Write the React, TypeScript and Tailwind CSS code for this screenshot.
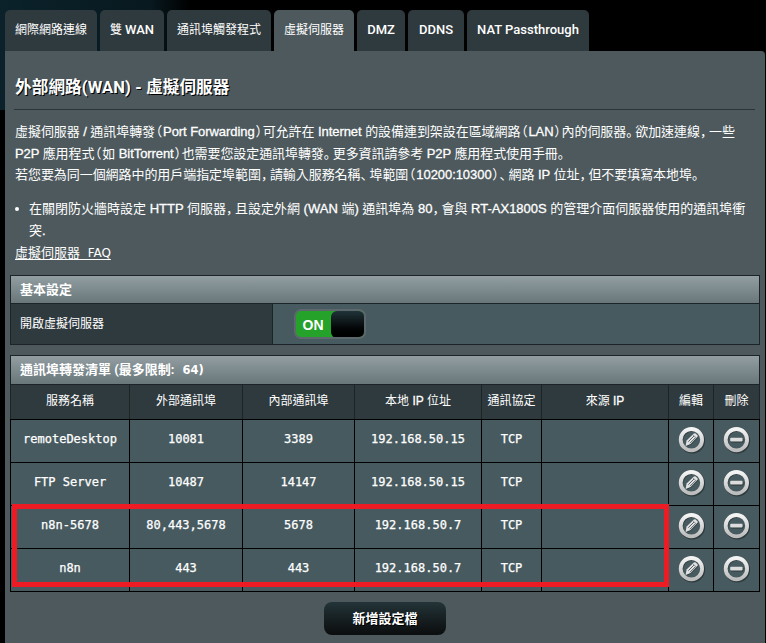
import React from "react";

const latin = "font-['Roboto','Noto_Sans_CJK_TC',sans-serif]";

const tabs = [
  { label: "網際網路連線", size: "w-[92px]" },
  { label: "雙 WAN", size: "w-[64px]" },
  { label: "通訊埠觸發程式", size: "w-[104px]" },
  { label: "虛擬伺服器", size: "w-[80px]", active: true },
  { label: "DMZ", size: "w-[48px]" },
  { label: "DDNS", size: "w-[56px]" },
  { label: "NAT Passthrough", size: "w-[122px]" },
];

const columns = ["服務名稱", "外部通訊埠", "內部通訊埠", "本地 IP 位址", "通訊協定", "來源 IP", "編輯", "刪除"];

const rows = [
  ["remoteDesktop", "10081", "3389", "192.168.50.15", "TCP", ""],
  ["FTP Server", "10487", "14147", "192.168.50.15", "TCP", ""],
  ["n8n-5678", "80,443,5678", "5678", "192.168.50.7", "TCP", ""],
  ["n8n", "443", "443", "192.168.50.7", "TCP", ""],
];

const grid = "grid grid-cols-[119px_113px_112px_127px_60px_127px_45px_46px]";

/* Runs of Chinese and Latin, with full-width punctuation set narrow. */
function Mixed({ text }: { text: string }) {
  return (
    <>
      {text.split(/([（），。、]|[\x20-\x7e]+)/).map((part, i) => {
        if (!part) return null;
        if (/^[（）]$/.test(part))
          return (
            <span key={i} className="inline-block w-[8px] text-center [font-feature-settings:'halt']">
              {part}
            </span>
          );
        if (/^[，。、]$/.test(part))
          return (
            <span key={i} className="inline-block w-[9px] text-left font-['Noto_Sans_CJK_JP',sans-serif] leading-none [font-feature-settings:'halt']">
              {part}
            </span>
          );
        if (/^[\x20-\x7e]+$/.test(part))
          return (
            <span key={i} className="font-['Liberation_Sans',sans-serif] [-webkit-text-stroke:0.3px_white]">
              {part}
            </span>
          );
        return <span key={i}>{part}</span>;
      })}
    </>
  );
}

function Ring({ children, id }: { children: React.ReactNode; id: string }) {
  return (
    <svg width="28" height="28" viewBox="0 0 28 28" className="block">
      <defs>
        <linearGradient id={id} x1="0" y1="0" x2="0" y2="1">
          <stop offset="0" stopColor="#f4f4f4" />
          <stop offset="1" stopColor="#bcbcbc" />
        </linearGradient>
      </defs>
      <circle cx="14.3" cy="14.7" r="11" fill="none" stroke="#1c2527" strokeOpacity="0.6" strokeWidth="3.6" />
      <circle cx="13.4" cy="13.7" r="10.7" fill="none" stroke={`url(#${id})`} strokeWidth="3.8" />
      {children}
    </svg>
  );
}

function EditIcon({ id }: { id: string }) {
  return (
    <Ring id={id}>
      <path d="M8.8 20.5 10 15.7 17.2 8.9Q18 8.3 18.7 9L20 10.4Q20.6 11.1 20 11.8L13 18.7Z" fill="#263033" fillOpacity="0.7" />
      <path d="M7.6 19.9 8.6 14.6 15.9 7.6Q16.8 6.8 17.7 7.6L19.4 9.3Q20.2 10.2 19.4 11.1L12.6 18.1Z" fill="#e2e2e2" />
      <path d="m10.3 15.7 5.7-5.7M12 17.2l5.5-5.5" stroke="#59656a" strokeWidth="1" />
      <path d="m15 8.8 3.3 3.3" stroke="#6c787b" strokeWidth="0.8" />
    </Ring>
  );
}

function DeleteIcon({ id }: { id: string }) {
  return (
    <Ring id={id}>
      <rect x="7.8" y="12.7" width="12.6" height="3.8" rx="1" fill="#2c3739" />
      <rect x="7.2" y="11.8" width="12.4" height="3.8" rx="1" fill="#dcdcdc" />
    </Ring>
  );
}

export default function App() {
  return (
    <div className={`${latin} h-[643px] w-[766px] overflow-hidden bg-black bg-[linear-gradient(90deg,#0b222a_0,#08191f_150px,#000_190px)] bg-[length:766px_110px] bg-no-repeat pl-[5px] pt-[10px] text-white`}>
      <nav className="flex h-[41px] gap-[3px]">
        {tabs.map((t) => (
          <div key={t.label} className={`${t.size} ${t.active ? "bg-[#4d595d]" : "bg-[#2f3a3e]"} flex shrink-0 items-center justify-center whitespace-pre rounded-t-[5px] pb-px text-[12px]`}>
            {t.label.split(/([A-Za-z][A-Za-z ]*)/).map((p, i) => (
              <span key={i} className={/[A-Z]/.test(p) ? "text-[13px] font-medium" : ""}>{p}</span>
            ))}
          </div>
        ))}
      </nav>

      <main className="flex h-[592px] w-[760px] flex-col rounded-tr-sm bg-[#4d595d] pl-[5px]">
        <h1 className="ml-[5px] mt-[25px] h-[24px] whitespace-pre text-[16.6px] font-bold leading-[24px] tracking-[0.1px] [text-shadow:1px_1px_0_#000]">外部網路(WAN) - 虛擬伺服器</h1>
        <div className="ml-[4px] mt-[9px] h-px w-[741px] shrink-0 bg-[#2b3538]" />

        <div className="ml-[5px] mt-[11px] whitespace-pre text-[13px] leading-[21.7px]">
          <p className="tracking-[-0.06px]"><Mixed text="虛擬伺服器 / 通訊埠轉發（Port Forwarding）可允許在 Internet 的設備連到架設在區域網路（LAN）內的伺服器。欲加速連線，一些" /></p>
          <p className="tracking-[-0.08px]"><Mixed text="P2P 應用程式（如 BitTorrent）也需要您設定通訊埠轉發。更多資訊請參考 P2P 應用程式使用手冊。" /></p>
          <p className="tracking-[-0.06px]"><Mixed text="若您要為同一個網路中的用戶端指定埠範圍，請輸入服務名稱、埠範圍（10200:10300）、網路 IP 位址，但不要填寫本地埠。" /></p>
        </div>
        <ul className="ml-[5px] mt-[12px] text-[13px] leading-[21.5px]">
          <li className="flex">
            <span className="mr-[10px] mt-[9px] h-[4px] w-[4px] rounded-full bg-white" />
            <div className="whitespace-pre">
              <p><Mixed text="在關閉防火牆時設定 HTTP 伺服器，且設定外網 (WAN 端) 通訊埠為 80，會與 RT-AX1800S 的管理介面伺服器使用的通訊埠衝" /></p>
              <p><Mixed text="突." /></p>
            </div>
          </li>
        </ul>
        <a className="ml-[5px] mt-px h-[21px] self-start whitespace-pre text-[13px] leading-[21px] underline underline-offset-2">虛擬伺服器<span className="font-['DejaVu_Sans',sans-serif] text-[12px]">  FAQ</span></a>

        <section className="mt-[12px] h-[70px] w-[750px] shrink-0 border border-[#1c2427]">
          <h2 className="h-[27px] bg-gradient-to-b from-[#929ea1] to-[#69777b] pl-[9px] text-[13px] font-bold leading-[27px]">基本設定</h2>
          <div className="flex h-[41px] border-t border-[#1c2427]">
            <div className="w-[262px] border-r border-[#1c2427] bg-[#2f3a3e] pl-[9px] text-[12px] leading-[40px]">開啟虛擬伺服器</div>
            <div className="flex flex-1 items-start bg-[#475a5f] pl-[21px] pt-[5px]">
              <div className="flex h-[30px] w-[72px] overflow-hidden rounded-[7px] border-2 border-[#5c686b] bg-[#24a229]">
                <span className="w-[34px] shrink-0 pt-px text-center font-['Liberation_Sans',sans-serif] text-[14px] font-bold leading-[26px]">ON</span>
                <span className="ml-px h-[27px] w-[34px] shrink-0 rounded-[6px] bg-gradient-to-b from-[#20343a] via-[#0a1012] to-black" />
              </div>
            </div>
          </div>
        </section>

        <section className="relative mt-[10px] w-[750px] shrink-0">
          <h2 className="h-[29px] whitespace-pre border-x border-t border-[#1c2427] bg-gradient-to-b from-[#929ea1] to-[#69777b] pl-[9px] text-[13px] font-bold leading-[28px]">
            通訊埠轉發清單 (最多限制:<span className="pl-[8px] font-['DejaVu_Sans',sans-serif] text-[11.5px]">64)</span>
          </h2>
          <div className={`${grid} h-[35px] border-r border-t border-[#1c2427] bg-[#2f3a3e]`}>
            {columns.map((c) => (
              <div key={c} className="whitespace-pre border-l border-[#1c2427] text-center text-[12px] leading-[32px]">
                <Mixed text={c} />
              </div>
            ))}
          </div>
          <div className="border-r border-t border-black bg-[#475a5f]">
            {rows.map((r, i) => (
              <div key={i} className={`${grid} h-[43px] border-b border-black`}>
                {r.map((v, j) => (
                  <div key={j} className="border-l border-black text-center font-['DejaVu_Sans_Mono',monospace] text-[12px] leading-[39px] [-webkit-text-stroke:0.25px_white]">{v}</div>
                ))}
                <div className="border-l border-black pl-[9px] pt-[6px]"><EditIcon id={`edit-${i}`} /></div>
                <div className="border-l border-black pl-[9px] pt-[6px]"><DeleteIcon id={`del-${i}`} /></div>
              </div>
            ))}
          </div>
          <div className="pointer-events-none absolute left-[2px] top-[149px] h-[83px] w-[657px] border-[5px] border-[#ed1c24]" />
        </section>

        <button className="ml-[314px] mt-[10px] h-[33px] w-[122px] shrink-0 rounded-[8px] bg-gradient-to-b from-[#233438] to-[#0b0d0e] text-[13px] font-bold [text-shadow:1px_1px_0_#000]">新增設定檔</button>
      </main>
    </div>
  );
}
